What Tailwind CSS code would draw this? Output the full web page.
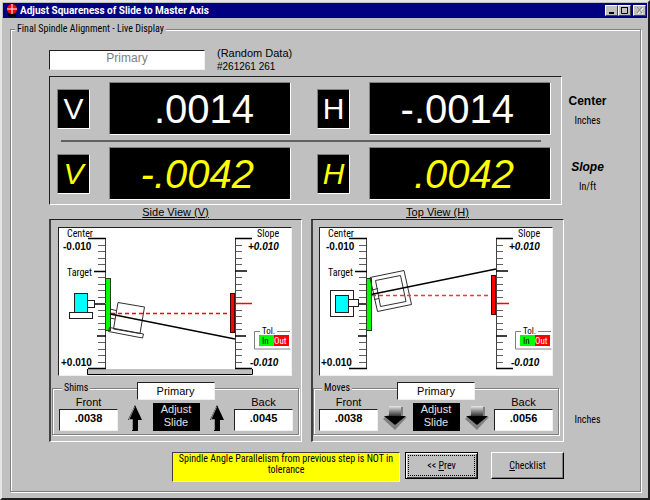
<!DOCTYPE html>
<html lang="en">

<head>
    <meta charset="UTF-8">
    <meta name="viewport" content="width=device-width, initial-scale=1.0">
    <title>Adjust Squareness of Slide to Master Axis</title>
    <script src="https://cdn.jsdelivr.net/npm/@tailwindcss/browser@4"></script>
</head>

<body class="min-h-screen flex flex-col bg-[#c0c0c0] text-black font-['Roboto_Condensed','Roboto',sans-serif] text-[10px] leading-3 border-2 border-t-[#e6e6e6] border-l-[#e6e6e6] border-r-[#202020] border-b-[#202020] p-px">

    <!-- title bar -->
    <header class="flex items-center h-[15px] bg-[#000080] pl-1 pr-px">
        <svg class="w-[10px] h-[13px] shrink-0" viewBox="0 0 10 13">
            <path d="M1 11h2v1h2v-1h3v1h1" stroke="#000" stroke-width="2" fill="none" />
            <circle cx="5" cy="5" r="5" fill="#f00" />
            <path d="M5 0v10M0 5h10" stroke="#fff" />
        </svg>
        <h1 class="ml-[3px] flex-1 font-bold text-[10px] text-white whitespace-nowrap font-['Roboto',sans-serif]">Adjust Squareness of Slide to Master Axis</h1>
        <div class="flex">
            <button aria-label="Minimize" class="w-[13px] h-[11px] bg-[#c0c0c0] border border-t-white border-l-white border-r-[#404040] border-b-[#404040]">
                <svg class="w-full h-full" viewBox="0 0 11 9"><path d="M3 7h5" stroke="#000" stroke-width="2" /></svg>
            </button>
            <button aria-label="Maximize" class="w-[13px] h-[11px] bg-[#c0c0c0] border border-t-white border-l-white border-r-[#404040] border-b-[#404040]">
                <svg class="w-full h-full" viewBox="0 0 11 9"><path d="M2.500 1.500h6v6h-6zM2 1.500h7" fill="none" stroke="#000" /></svg>
            </button>
            <button aria-label="Close" disabled class="ml-[2px] w-[13px] h-[11px] bg-[#c0c0c0] border border-t-white border-l-white border-r-[#404040] border-b-[#404040]">
                <svg class="w-full h-full" viewBox="0 0 11 9">
                    <path d="M4 2l5 6M9 2l-5 6" stroke="#fff" />
                    <path d="M3 1l5 6M8 1l-5 6" stroke="#808080" />
                </svg>
            </button>
        </div>
    </header>

    <fieldset class="flex-1 mt-[5px] ml-[7px] mr-[6px] mb-[5px] border border-[#808080] shadow-[1px_1px_0_#fff,inset_1px_1px_0_#fff]">
        <legend class="ml-1 px-[2px] bg-[#c0c0c0] leading-3">Final Spindle Alignment - Live Display</legend>

        <main class="pt-3 pl-[38px] pr-[29px] pb-2 grid grid-cols-[1fr_47px]">

            <div class="col-span-2 flex items-center gap-[12px] h-[26px]">
                <input type="text" readonly value="Primary" aria-label="Position"
                    class="w-[156px] h-5 bg-white text-center text-xs leading-4 pb-1 text-[#808080] font-['Liberation_Sans',sans-serif] border border-t-[#202020] border-l-[#202020] border-r-[#f0f0f0] border-b-[#f0f0f0]">
                <div class="font-['Liberation_Sans',sans-serif] leading-[13px]">
                    <p class="text-[11px]">(Random Data)</p>
                    <p>#261261 261</p>
                </div>
            </div>

            <!-- readouts -->
            <section class="mt-[3px] mr-[2px] pl-[7px] pr-[10px] pt-[5px] pb-1 flex flex-col gap-[5px] border border-t-[#202020] border-l-[#202020] border-r-white border-b-white font-['Liberation_Sans',sans-serif]">
                <div class="flex gap-[26px] text-white">
                    <div class="flex-1 flex items-center gap-[19px]">
                        <div class="w-[33px] h-10 flex items-center justify-center bg-black text-3xl border border-t-[#808080] border-l-[#808080] border-r-white border-b-white">V</div>
                        <output class="flex-1 h-[53px] flex items-center justify-end pr-[36px] bg-black text-[40px] border border-t-[#808080] border-l-[#808080] border-r-white border-b-white">.0014</output>
                    </div>
                    <div class="flex-1 flex items-center gap-[19px]">
                        <div class="w-[33px] h-10 flex items-center justify-center bg-black text-3xl border border-t-[#808080] border-l-[#808080] border-r-white border-b-white">H</div>
                        <output class="flex-1 h-[53px] flex items-center justify-end pr-[36px] bg-black text-[40px] border border-t-[#808080] border-l-[#808080] border-r-white border-b-white">-.0014</output>
                    </div>
                </div>
                <hr class="ml-1 mr-[10px] border-t-2 border-[#606060]">
                <div class="flex gap-[26px] text-[#ffff00] italic">
                    <div class="flex-1 flex items-center gap-[19px]">
                        <div class="w-[33px] h-10 flex items-center justify-center bg-black text-3xl border border-t-[#808080] border-l-[#808080] border-r-white border-b-white">V</div>
                        <output class="flex-1 h-[53px] flex items-center justify-end pr-[36px] bg-black text-[40px] border border-t-[#808080] border-l-[#808080] border-r-white border-b-white">-.0042</output>
                    </div>
                    <div class="flex-1 flex items-center gap-[19px]">
                        <div class="w-[33px] h-10 flex items-center justify-center bg-black text-3xl border border-t-[#808080] border-l-[#808080] border-r-white border-b-white">H</div>
                        <output class="flex-1 h-[53px] flex items-center justify-end pr-[36px] bg-black text-[40px] border border-t-[#808080] border-l-[#808080] border-r-white border-b-white">.0042</output>
                    </div>
                </div>
            </section>
            <div class="pt-5 flex flex-col gap-8 text-center">
                <div>
                    <p class="font-['Liberation_Sans',sans-serif] font-bold text-xs">Center</p>
                    <p class="mt-[6px]">Inches</p>
                </div>
                <div>
                    <p class="font-['Liberation_Sans',sans-serif] font-bold italic text-xs">Slope</p>
                    <p class="mt-[6px]">In/ft</p>
                </div>
            </div>

            <!-- views -->
            <div class="flex gap-[9px]">
                <section class="flex-1 min-w-0">
                    <h2 class="h-[14px] leading-[14px] text-center text-[11px] underline font-['Liberation_Sans',sans-serif]">Side View (V)</h2>
                    <div class="pt-[7px] pb-[6px] border-l-2 border border-t-[#202020] border-l-[#404040] border-r-white border-b-white">
                        <svg class="block ml-[7px] mr-[9px] w-[calc(100%-16px)] bg-white border border-t-[#202020] border-l-[#202020] border-r-[#f0f0f0] border-b-[#f0f0f0]" viewBox="0 0 232 147">
                            <defs>
                                <g id="scales" fill="none" stroke="#000">
                                    <path d="M46.500 10v131M176.500 10v131" stroke="#404040" />
                                    <path stroke="#606060" d="M39 17.500h7M39 23.500h7M39 30.500h7M39 36.500h7M39 49.500h7M39 56.500h7M39 62.500h7M39 69.500h7M39 82.500h7M39 88.500h7M39 95.500h7M39 101.500h7M39 114.500h7M39 121.500h7M39 127.500h7M39 134.500h7" />
                                    <path stroke="#606060" d="M177 17.500h6M177 23.500h6M177 30.500h6M177 36.500h6M177 49.500h6M177 56.500h6M177 62.500h6M177 69.500h6M177 82.500h6M177 88.500h6M177 95.500h6M177 101.500h6M177 114.500h6M177 121.500h6M177 127.500h6M177 134.500h6" />
                                    <path d="M29 10.500h18M35 43.500h12M36 76h10M38 108h9M29 140.500h18M176 10.500h17M176 43h12M176 108h11M176 140.500h17" stroke-width="1.500" />
                                </g>
                            </defs>
                            <rect x="28" y="141" width="165" height="6" fill="#c0c0c0" />
                            <path d="M28.500 141v5.500h165v-5.500" fill="none" stroke="#000" />
                            <use href="#scales" />
                            <rect x="46.500" y="50.500" width="5" height="52" fill="#0f0" stroke="#204020" />
                            <rect x="171.500" y="65.500" width="4" height="39" fill="#f00" stroke="#400000" />
                            <path d="M177 75.500h16" stroke="#f00" stroke-width="1.500" />
                            <path d="M46 75.500h1" stroke="#f80" />
                            <g fill="#fff" stroke="#202020">
                                <rect x="15.500" y="65.500" width="13" height="19" fill="#0ff" />
                                <rect x="28.500" y="72.500" width="7" height="7" />
                                <rect x="10.500" y="84.500" width="23" height="6" />
                            </g>
                            <g fill="none" stroke="#303030">
                                <path d="M59 74.500L85.500 79 81 105.500 54.500 101z" />
                                <path d="M50.500 99.500L84.500 106 83.500 110 49.500 103.500z" />
                                <path d="M51 81l6 1.500M51 90l5 1" />
                            </g>
                            <path d="M52 85.500h119" stroke="#f00" stroke-width="1.500" stroke-dasharray="4 3" />
                            <path d="M51 86L176 111" stroke="#000" stroke-width="1.500" />
                            <g font-size="10">
                                <text x="8" y="9">Center</text>
                                <text x="8" y="48">Target</text>
                                <text x="198" y="9">Slope</text>
                            </g>
                            <g font-size="10" font-weight="bold" font-family="Liberation Sans, sans-serif">
                                <text x="4" y="22">-0.010</text>
                                <text x="2" y="138">+0.010</text>
                                <text x="189" y="22" font-style="italic">+0.010</text>
                                <text x="191" y="138" font-style="italic">-0.010</text>
                            </g>
                            <path d="M201 103.500h-5.500v17.500h36M218 103.500h13" fill="none" stroke="#808080" />
                            <rect x="200" y="107" width="15" height="11" fill="#0f0" />
                            <rect x="215" y="107" width="15" height="11" fill="#f00" />
                            <g font-size="9">
                                <text x="203" y="106">Tol.</text>
                                <text x="203" y="116">In</text>
                                <text x="215" y="116" fill="#fff">Out</text>
                            </g>
                        </svg>
                        <fieldset class="relative mt-[6px] ml-px mr-[2px] pt-[2px] pb-[3px] pl-[6px] pr-[5px] border border-[#808080] shadow-[1px_1px_0_#fff,inset_1px_1px_0_#fff] font-['Liberation_Sans',sans-serif] text-[11px]">
                            <legend class="px-[2px] ml-[3px] bg-[#c0c0c0] text-[10px] leading-3 font-['Roboto_Condensed','Roboto',sans-serif]">Shims</legend>
                            <div class="absolute -top-3 left-1/2 -translate-x-1/2 w-[78px] h-[18px] leading-4 text-center bg-white border border-t-[#202020] border-l-[#202020] border-r-[#f0f0f0] border-b-[#f0f0f0]">Primary</div>
                            <div class="flex items-end justify-between">
                                <div class="w-[59px] text-center">
                                    <label for="shim-front" class="block leading-[13px]">Front</label>
                                    <input id="shim-front" type="text" value=".0038" class="block w-full h-[22px] pb-1 bg-white text-center font-bold border border-t-[#202020] border-l-[#202020] border-r-[#f0f0f0] border-b-[#f0f0f0]">
                                </div>
                                <svg class="w-[14px] h-[26px]" viewBox="0 0 14 26">
                                    <path d="M7 0l7 15h-4v11H4V15H0z" fill="#000" />
                                    <path d="M6.500 2L1 14.500h3.500V25" fill="none" stroke="#909090" />
                                </svg>
                                <p class="w-[47px] h-7 leading-[13px] bg-black text-[#e0e0e0] text-center">Adjust<br>Slide</p>
                                <svg class="w-[14px] h-[26px]" viewBox="0 0 14 26">
                                    <path d="M7 0l7 15h-4v11H4V15H0z" fill="#000" />
                                    <path d="M6.500 2L1 14.500h3.500V25" fill="none" stroke="#909090" />
                                </svg>
                                <div class="w-[59px] text-center">
                                    <label for="shim-back" class="block leading-[13px]">Back</label>
                                    <input id="shim-back" type="text" value=".0045" class="block w-full h-[22px] pb-1 bg-white text-center font-bold border border-t-[#202020] border-l-[#202020] border-r-[#f0f0f0] border-b-[#f0f0f0]">
                                </div>
                            </div>
                        </fieldset>
                    </div>
                </section>

                <section class="flex-1 min-w-0">
                    <h2 class="h-[14px] leading-[14px] text-center text-[11px] underline font-['Liberation_Sans',sans-serif]">Top View (H)</h2>
                    <div class="pt-[7px] pb-[6px] border-l-2 border border-t-[#202020] border-l-[#404040] border-r-white border-b-white">
                        <svg class="block ml-[6px] mr-[10px] w-[calc(100%-16px)] bg-white border border-t-[#202020] border-l-[#202020] border-r-[#f0f0f0] border-b-[#f0f0f0]" viewBox="0 0 232 147">
                            <use href="#scales" />
                            <rect x="46.500" y="50.500" width="5" height="52" fill="#0f0" stroke="#204020" />
                            <rect x="171.500" y="47.500" width="4" height="39" fill="#f00" stroke="#400000" />
                            <path d="M177 75.500h12" stroke="#f00" stroke-width="1.500" />
                            <path d="M46 75.500h1" stroke="#f00" />
                            <g fill="#fff" stroke="#202020">
                                <rect x="10.500" y="62.500" width="23" height="26" />
                                <rect x="15.500" y="67.500" width="13" height="17" fill="#0ff" />
                                <rect x="28.500" y="71.500" width="10" height="7" />
                            </g>
                            <g fill="none" stroke="#303030">
                                <path d="M50 49.500L84 42.500 91.500 76.500 57.500 83.500z" />
                                <path d="M55.500 52.500L80.500 47.500 86 73.500 60.500 78.500z" />
                                <path d="M52 62l6-1.500M54 71.500l5-1" />
                            </g>
                            <path d="M52 67.500h119" stroke="#f33" stroke-width="1.500" stroke-dasharray="4 3" />
                            <path d="M51 66.500L176 41" stroke="#000" stroke-width="1.500" />
                            <g font-size="10">
                                <text x="8" y="9">Center</text>
                                <text x="8" y="48">Target</text>
                                <text x="198" y="9">Slope</text>
                            </g>
                            <g font-size="10" font-weight="bold" font-family="Liberation Sans, sans-serif">
                                <text x="6" y="22">-0.010</text>
                                <text x="1" y="138">+0.010</text>
                                <text x="189" y="22" font-style="italic">+0.010</text>
                                <text x="191" y="138" font-style="italic">-0.010</text>
                            </g>
                            <path d="M201 103.500h-5.500v17.500h36M218 103.500h13" fill="none" stroke="#808080" />
                            <rect x="200" y="107" width="15" height="11" fill="#0f0" />
                            <rect x="215" y="107" width="15" height="11" fill="#f00" />
                            <g font-size="9">
                                <text x="203" y="106">Tol.</text>
                                <text x="203" y="116">In</text>
                                <text x="215" y="116" fill="#fff">Out</text>
                            </g>
                        </svg>
                        <fieldset class="relative mt-[6px] mr-1 pt-[2px] pb-[3px] pl-[5px] pr-[5px] border border-[#808080] shadow-[1px_1px_0_#fff,inset_1px_1px_0_#fff] font-['Liberation_Sans',sans-serif] text-[11px]">
                            <legend class="px-[2px] ml-[3px] bg-[#c0c0c0] text-[10px] leading-3 font-['Roboto_Condensed','Roboto',sans-serif]">Moves</legend>
                            <div class="absolute -top-3 left-1/2 -translate-x-1/2 w-[78px] h-[18px] leading-4 text-center bg-white border border-t-[#202020] border-l-[#202020] border-r-[#f0f0f0] border-b-[#f0f0f0]">Primary</div>
                            <div class="flex items-end justify-between">
                                <div class="w-[59px] text-center">
                                    <label for="move-front" class="block leading-[13px]">Front</label>
                                    <input id="move-front" type="text" value=".0038" class="block w-full h-[22px] pb-1 bg-white text-center font-bold border border-t-[#202020] border-l-[#202020] border-r-[#f0f0f0] border-b-[#f0f0f0]">
                                </div>
                                <svg class="w-6 h-[25px]" viewBox="0 0 24 25">
                                    <defs>
                                        <linearGradient id="shaft" x1="0" y1="0" x2="0" y2="1">
                                            <stop offset="0" stop-color="#e8e8e8" />
                                            <stop offset="1" stop-color="#202020" />
                                        </linearGradient>
                                    </defs>
                                    <path d="M18 1h2v10h4L12 24 0 13l2-2z" fill="#808080" />
                                    <rect x="6" y="0" width="12" height="11" fill="url(#shaft)" />
                                    <path d="M1 10h22L12 19z" fill="#000" />
                                </svg>
                                <p class="w-[47px] h-7 leading-[13px] bg-black text-[#e0e0e0] text-center">Adjust<br>Slide</p>
                                <svg class="w-6 h-[25px]" viewBox="0 0 24 25">
                                    <path d="M18 1h2v10h4L12 24 0 13l2-2z" fill="#808080" />
                                    <rect x="6" y="0" width="12" height="11" fill="url(#shaft)" />
                                    <path d="M1 10h22L12 19z" fill="#000" />
                                </svg>
                                <div class="w-[59px] text-center">
                                    <label for="move-back" class="block leading-[13px]">Back</label>
                                    <input id="move-back" type="text" value=".0056" class="block w-full h-[22px] pb-1 bg-white text-center font-bold border border-t-[#202020] border-l-[#202020] border-r-[#f0f0f0] border-b-[#f0f0f0]">
                                </div>
                            </div>
                        </fieldset>
                    </div>
                </section>
            </div>
            <p class="self-end pb-4 text-center">Inches</p>

            <!-- status and navigation -->
            <footer class="mt-[10px] flex items-start justify-end">
                <p role="status" class="w-[228px] h-[30px] px-1 leading-[11px] text-center bg-[#ffff00] border border-t-[#404040] border-l-[#404040] border-r-white border-b-white">Spindle Angle Parallelism from previous step is NOT in tolerance</p>
                <button class="ml-[5px] w-[73px] h-[27px] p-[2px] bg-[#c0c0c0] border border-black shadow-[inset_1px_1px_0_#fff,inset_-1px_-1px_0_#404040]">
                    <span class="flex h-full items-center justify-center border border-dotted border-black">&lt;&lt;&nbsp;<u>P</u>rev</span>
                </button>
                <button class="ml-[13px] w-[73px] h-[27px] bg-[#c0c0c0] border border-t-white border-l-white border-r-black border-b-black shadow-[inset_-1px_-1px_0_#808080]"><u>C</u>hecklist</button>
            </footer>
        </main>
    </fieldset>
</body>

</html>
